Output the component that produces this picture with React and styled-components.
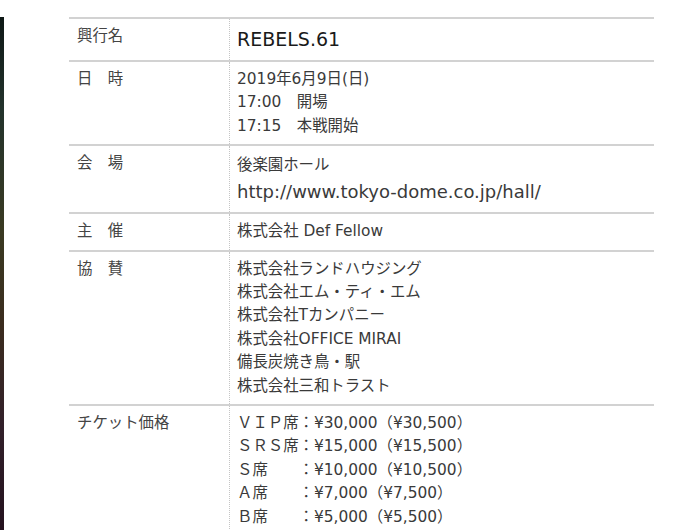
import React from "react";
import styled, { createGlobalStyle } from "styled-components";

const GlobalStyle = createGlobalStyle`
	html, body {
		margin: 0;
		padding: 0;
		background: #ffffff;
	}
	body {
		font-family: "DejaVu Sans", "Noto Sans CJK JP", sans-serif;
		overflow: hidden;
	}
`;

const rows = [
	{ label: "興行名", lines: ["REBELS.61"], kind: "title" },
	{
		label: "日　時",
		lines: ["2019年6月9日(日)", "17:00　開場", "17:15　本戦開始"],
	},
	{
		label: "会　場",
		lines: ["後楽園ホール", "http://www.tokyo-dome.co.jp/hall/"],
		kind: "url",
	},
	{ label: "主　催", lines: ["株式会社 Def Fellow"] },
	{
		label: "協　賛",
		lines: [
			"株式会社ランドハウジング",
			"株式会社エム・ティ・エム",
			"株式会社Tカンパニー",
			"株式会社OFFICE MIRAI",
			"備長炭焼き鳥・駅",
			"株式会社三和トラスト",
		],
	},
	{
		label: "チケット価格",
		lines: [
			"ＶＩＰ席：¥30,000（¥30,500）",
			"ＳＲＳ席：¥15,000（¥15,500）",
			"Ｓ席　　：¥10,000（¥10,500）",
			"Ａ席　　：¥7,000（¥7,500）",
			"Ｂ席　　：¥5,000（¥5,500）",
		],
	},
];

const App = () => {
	return (
		<>
			<GlobalStyle />
			<Page>
				<Strip />
				<Table>
					{rows.map((row) => (
						<Row key={row.label}>
							<Label>{row.label}</Label>
							<Value>
								{row.lines.map((line, i) => {
									if (row.kind === "title") return <Title key={i}>{line}</Title>;
									if (row.kind === "url")
										return i === 1 ? <Url key={i}>{line}</Url> : <Line key={i} $lh={26}>{line}</Line>;
									return <Line key={i}>{line}</Line>;
								})}
							</Value>
						</Row>
					))}
				</Table>
			</Page>
		</>
	);
};

export default App;

const Page = styled.div`
	display: flex;
	align-items: flex-start;
	height: 100vh;
	overflow: hidden;
`;

const Strip = styled.div`
	width: 4px;
	flex-shrink: 0;
	align-self: stretch;
	margin-top: 17px;
	background: linear-gradient(
		to bottom,
		#0e1816,
		#23332c 18%,
		#3a3a22 42%,
		#3b2c1e 60%,
		#32202a 80%,
		#24121e
	);
`;

const Table = styled.div`
	margin: 17px 0 0 65px;
	width: 585px;
	border-top: 2px solid #d2d2d2;
`;

const Row = styled.div`
	display: grid;
	grid-template-columns: 160px 1fr;
	border-bottom: 2px solid #d2d2d2;
`;

const Label = styled.div`
	padding: 6px 8px;
	font-size: 15.4px;
	line-height: 23.4px;
	color: #444444;
`;

const Value = styled.div`
	border-left: 1px dotted #c4c4c4;
	padding: 6px 7px;
	color: #3a3a3a;
	font-size: 15.4px;
	line-height: 23.4px;
`;

const Line = styled.div`
	white-space: nowrap;
	line-height: ${({ $lh }) => ($lh ? `${$lh}px` : "23.4px")};
`;

const Title = styled.div`
	font-size: 19px;
	line-height: 29px;
	color: #1a1a1a;
`;

const Url = styled.div`
	font-size: 18px;
	line-height: 28px;
`;
